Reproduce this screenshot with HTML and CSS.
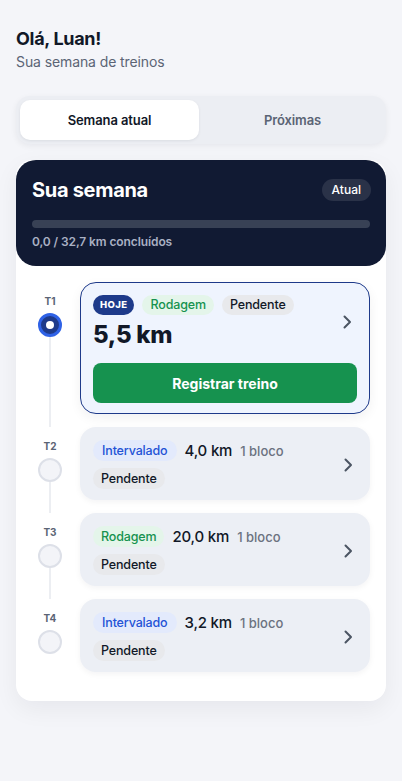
FILE: index.html
```html
<!DOCTYPE html>
<html lang="pt-BR">
<head>
<meta charset="utf-8">
<meta name="viewport" content="width=device-width, initial-scale=1">
<title>Sua semana</title>
<link rel="stylesheet" href="styles.css">
</head>
<body>
<main class="page">
  <header class="greeting">
    <h1 class="hello">Olá, Luan!</h1>
    <p class="subtitle">Sua semana de treinos</p>
  </header>

  <nav class="tabs">
    <button class="tab tab-active">Semana atual</button>
    <button class="tab">Próximas</button>
  </nav>

  <section class="week">
    <div class="week-head">
      <div class="week-title-row">
        <h2 class="week-title">Sua semana</h2>
        <span class="pill-current">Atual</span>
      </div>
      <div class="progress"><div class="progress-fill" style="width:0%"></div></div>
      <p class="progress-text">0,0 / 32,7 km concluídos</p>
    </div>

    <ol class="timeline">
      <li class="row">
        <div class="rail">
          <span class="rail-label">T1</span>
          <span class="dot dot-active"></span>
          <span class="rail-line"></span>
        </div>
        <div class="card card-today">
          <div class="card-top">
            <div class="card-main">
              <div class="chips">
                <span class="chip chip-today">HOJE</span>
                <span class="chip chip-green">Rodagem</span>
                <span class="chip chip-gray">Pendente</span>
              </div>
              <div class="km-big">5,5 km</div>
            </div>
            <svg class="chev" width="12" height="16" viewBox="0 0 12 16"><path d="M3.5 2.5 L9 8 L3.5 13.5" fill="none" stroke="#4b5563" stroke-width="2" stroke-linecap="round" stroke-linejoin="round"/></svg>
          </div>
          <button class="btn-register">Registrar treino</button>
        </div>
      </li>

      <li class="row">
        <div class="rail">
          <span class="rail-label">T2</span>
          <span class="dot"></span>
          <span class="rail-line"></span>
        </div>
        <div class="card">
          <div class="card-main">
            <div class="chips">
              <span class="chip chip-blue">Intervalado</span>
              <span class="km">4,0 km</span>
              <span class="blocks">1 bloco</span>
            </div>
            <div class="chips">
              <span class="chip chip-gray">Pendente</span>
            </div>
          </div>
          <svg class="chev" width="12" height="16" viewBox="0 0 12 16"><path d="M3.5 2.5 L9 8 L3.5 13.5" fill="none" stroke="#4b5563" stroke-width="2" stroke-linecap="round" stroke-linejoin="round"/></svg>
        </div>
      </li>

      <li class="row">
        <div class="rail">
          <span class="rail-label">T3</span>
          <span class="dot"></span>
          <span class="rail-line"></span>
        </div>
        <div class="card">
          <div class="card-main">
            <div class="chips">
              <span class="chip chip-green">Rodagem</span>
              <span class="km">20,0 km</span>
              <span class="blocks">1 bloco</span>
            </div>
            <div class="chips">
              <span class="chip chip-gray">Pendente</span>
            </div>
          </div>
          <svg class="chev" width="12" height="16" viewBox="0 0 12 16"><path d="M3.5 2.5 L9 8 L3.5 13.5" fill="none" stroke="#4b5563" stroke-width="2" stroke-linecap="round" stroke-linejoin="round"/></svg>
        </div>
      </li>

      <li class="row row-last">
        <div class="rail">
          <span class="rail-label">T4</span>
          <span class="dot"></span>
        </div>
        <div class="card">
          <div class="card-main">
            <div class="chips">
              <span class="chip chip-blue">Intervalado</span>
              <span class="km">3,2 km</span>
              <span class="blocks">1 bloco</span>
            </div>
            <div class="chips">
              <span class="chip chip-gray">Pendente</span>
            </div>
          </div>
          <svg class="chev" width="12" height="16" viewBox="0 0 12 16"><path d="M3.5 2.5 L9 8 L3.5 13.5" fill="none" stroke="#4b5563" stroke-width="2" stroke-linecap="round" stroke-linejoin="round"/></svg>
        </div>
      </li>
    </ol>
  </section>
</main>
</body>
</html>
```

FILE: styles.css
```css
* { box-sizing: border-box; }

html, body {
  margin: 0;
  padding: 0;
  background: #f4f5f9;
}

body {
  font-family: Inter, "Noto Sans", "Liberation Sans", sans-serif;
  color: #111827;
}

.page {
  padding: 27px 16px 40px;
}

.greeting { margin: 0; }

.hello {
  margin: 0;
  font-size: 18px;
  line-height: 24px;
  font-weight: 700;
  color: #111827;
  letter-spacing: -0.3px;
}

.subtitle {
  margin: 1px 0 0;
  font-size: 14px;
  line-height: 20px;
  color: #5b6475;
  letter-spacing: -0.1px;
}

.tabs {
  margin-top: 24px;
  display: grid;
  grid-template-columns: 1fr 1fr;
  gap: 4px;
  padding: 4px;
  background: #eceef3;
  border-radius: 14px;
  box-shadow: 0 2px 6px rgba(15, 23, 42, 0.06);
}

.tab {
  height: 40px;
  border: 0;
  background: transparent;
  font-family: inherit;
  font-size: 13px;
  font-weight: 600;
  color: #5b6475;
  border-radius: 10px;
  padding: 0;
  letter-spacing: -0.1px;
}

.tab-active {
  background: #ffffff;
  color: #111827;
  box-shadow: 0 1px 3px rgba(15, 23, 42, 0.08);
}

.week {
  margin-top: 16px;
  background: #ffffff;
  border-radius: 16px;
  box-shadow: 0 8px 24px rgba(15, 23, 42, 0.06);
  overflow: hidden;
}

.week-head {
  background: #111a33;
  border-radius: 20px;
  padding: 16px 16px 16px;
}

.week-title-row {
  display: flex;
  align-items: center;
  justify-content: space-between;
  height: 28px;
}

.week-title {
  margin: 0;
  font-size: 20px;
  line-height: 28px;
  font-weight: 700;
  color: #ffffff;
  letter-spacing: -0.3px;
}

.pill-current {
  height: 22px;
  line-height: 22px;
  padding: 0 10px;
  border-radius: 11px;
  background: #2a3248;
  color: #ffffff;
  font-size: 12px;
  font-weight: 500;
  margin-right: -1px;
}

.progress {
  margin-top: 16px;
  height: 8px;
  border-radius: 4px;
  background: #384155;
  overflow: hidden;
}

.progress-fill {
  height: 100%;
  background: #22c55e;
}

.progress-text {
  margin: 6px 0 0;
  font-size: 12px;
  line-height: 16px;
  font-weight: 600;
  color: #a9b0c3;
  letter-spacing: -0.1px;
}

.timeline {
  list-style: none;
  margin: 0;
  padding: 16px 16px 29px 16px;
}

.row {
  display: flex;
  gap: 12px;
  padding-bottom: 13px;
}

.row-last { padding-bottom: 0; }

.rail {
  width: 36px;
  display: flex;
  flex-direction: column;
  align-items: center;
  padding-top: 13px;
  margin-bottom: -13px;
}

.row-last .rail { margin-bottom: 0; }

.rail-label {
  font-size: 10px;
  line-height: 12px;
  font-weight: 700;
  color: #5b6475;
}

.dot {
  margin-top: 6px;
  width: 24px;
  height: 24px;
  border-radius: 50%;
  background: #f3f4f8;
  border: 2px solid #dde0e8;
  flex: none;
}

.dot-active {
  background: #1e3a8a;
  border: 3px solid #2f62e6;
  display: flex;
  align-items: center;
  justify-content: center;
}

.dot-active::after {
  content: "";
  width: 8px;
  height: 8px;
  border-radius: 50%;
  background: #ffffff;
}

.rail-line {
  flex: 1;
  width: 2px;
  background: #eceef2;
}

.card {
  flex: 1;
  min-width: 0;
  display: flex;
  align-items: center;
  gap: 8px;
  padding: 13px 16px 11px 13px;
  background: #eceff5;
  border-radius: 16px;
  box-shadow: 0 2px 6px rgba(15, 23, 42, 0.05);
}

.card-today {
  display: block;
  padding: 12px 12px 10px 12px;
  background: #eff4fe;
  border: 1px solid #1e3a8a;
  box-shadow: 0 4px 12px rgba(15, 23, 42, 0.06);
}

.card-top {
  display: flex;
  align-items: center;
  gap: 8px;
  padding-right: 4px;
}

.card-main {
  flex: 1;
  min-width: 0;
  display: flex;
  flex-direction: column;
  gap: 7px;
}

.card-today .card-main { gap: 6px; }

.chips {
  display: flex;
  align-items: center;
  gap: 8px;
}

.chip {
  height: 21px;
  line-height: 21px;
  padding: 0 8px;
  border-radius: 11px;
  font-size: 12.5px;
  font-weight: 500;
  white-space: nowrap;
  letter-spacing: -0.15px;
}

.card-today .chip { height: 20px; line-height: 20px; }

.chip-today {
  background: #1e3a8a;
  color: #ffffff;
  font-size: 9.5px;
  font-weight: 800;
  letter-spacing: 0.4px;
  padding: 0 7px;
}

.chip-green {
  background: #e4f5ea;
  color: #16924f;
}

.chip-blue {
  background: #e3eafc;
  color: #2453d6;
  padding: 0 9px;
}

.chip-gray {
  background: #e8e9ec;
  color: #111827;
}

.km {
  font-size: 15px;
  font-weight: 500;
  color: #111827;
  white-space: nowrap;
  letter-spacing: -0.2px;
}

.blocks {
  font-size: 13px;
  font-weight: 500;
  color: #6b7280;
  white-space: nowrap;
}

.km-big {
  font-size: 24px;
  line-height: 28px;
  font-weight: 800;
  color: #111827;
  letter-spacing: -0.3px;
}

.chev { flex: none; }

.btn-register {
  display: block;
  width: 100%;
  margin-top: 14px;
  height: 40px;
  border: 0;
  border-radius: 8px;
  background: #16924f;
  color: #ffffff;
  font-family: inherit;
  font-size: 14px;
  font-weight: 700;
}
```
